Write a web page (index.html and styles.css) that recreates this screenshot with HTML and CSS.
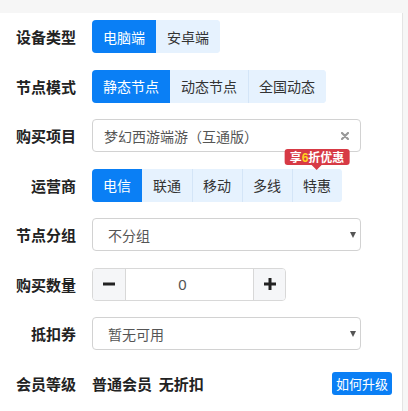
FILE: index.html
```html
<!DOCTYPE html>
<html lang="zh">
<head>
<meta charset="utf-8">
<link rel="stylesheet" href="styles.css">
</head>
<body>
<div class="panel">
  <div class="row">
    <div class="label">设备类型</div>
    <div class="btn-group">
      <span class="btn active">电脑端</span>
      <span class="btn">安卓端</span>
    </div>
  </div>
  <div class="row">
    <div class="label">节点模式</div>
    <div class="btn-group">
      <span class="btn active">静态节点</span>
      <span class="btn">动态节点</span>
      <span class="btn">全国动态</span>
    </div>
  </div>
  <div class="row">
    <div class="label">购买项目</div>
    <div class="field input">
      <span class="value">梦幻西游端游（互通版）</span>
      <svg class="clear" width="8" height="8" viewBox="0 0 8 8"><path d="M1 1L7 7M7 1L1 7" stroke="#999" stroke-width="2.2" stroke-linecap="round"/></svg>
    </div>
  </div>
  <div class="row">
    <div class="label">运营商</div>
    <div class="btn-group">
      <span class="btn active">电信</span>
      <span class="btn">联通</span>
      <span class="btn">移动</span>
      <span class="btn">多线</span>
      <span class="btn has-badge">特惠<span class="badge">享<b class="six">6</b>折优惠</span></span>
    </div>
  </div>
  <div class="row">
    <div class="label">节点分组</div>
    <div class="field select">
      <span class="value">不分组</span>
      <span class="caret"></span>
    </div>
  </div>
  <div class="row">
    <div class="label">购买数量</div>
    <div class="qty">
      <span class="qty-btn minus"><svg width="12" height="12" viewBox="0 0 12 12"><rect x="0" y="4.5" width="12" height="3" fill="#222"/></svg></span>
      <span class="qty-val">0</span>
      <span class="qty-btn plus"><svg width="12" height="12" viewBox="0 0 12 12"><rect x="0" y="4.5" width="12" height="3" fill="#222"/><rect x="4.5" y="0" width="3" height="12" fill="#222"/></svg></span>
    </div>
  </div>
  <div class="row">
    <div class="label">抵扣券</div>
    <div class="field select">
      <span class="value">暂无可用</span>
      <span class="caret"></span>
    </div>
  </div>
  <div class="row last">
    <div class="label">会员等级</div>
    <div class="member">普通会员&nbsp;&nbsp;无折扣</div>
    <span class="upgrade">如何升级</span>
  </div>
</div>
</body>
</html>
```
FILE: styles.css
```css
html, body {
  margin: 0;
  padding: 0;
}
body {
  background: #f6f6f6;
  font-family: "Noto Sans CJK SC", "Noto Sans", sans-serif;
  color: #333;
  height: 411px;
  overflow: hidden;
}
.panel {
  margin-top: 13px;
  width: 402px;
  border-right: 1px solid #e4e4e4;
  background: #fff;
  padding: 7px 0 11px;
  box-sizing: content-box;
}
.row {
  display: flex;
  align-items: center;
  height: 33px;
  margin-bottom: 16.5px;
  padding-right: 9px;
}
.row.last {
  margin-bottom: 0;
}
.label {
  width: 76px;
  margin-right: 16px;
  text-align: right;
  font-size: 15px;
  font-weight: bold;
  color: #222;
  flex-shrink: 0;
}
.btn-group {
  display: flex;
  height: 33px;
  border-radius: 4px;
  background: #e6f2fe;
}
.btn {
  position: relative;
  display: flex;
  align-items: center;
  padding: 0 11px;
  font-size: 14px;
  color: #333;
  background: #e6f2fe;
  box-shadow: inset 1px 0 0 #d4e5f7;
}
.btn:first-child {
  box-shadow: none;
  border-radius: 4px 0 0 4px;
}
.btn:last-child {
  border-radius: 0 4px 4px 0;
}
.btn.active {
  background: #0a7ff5;
  color: #fff;
  box-shadow: none;
}
.btn.active + .btn {
  box-shadow: none;
}
.badge {
  position: absolute;
  left: 50%;
  top: -20px;
  transform: translateX(-50%);
  height: 16px;
  padding: 0 5px;
  background: #d73a45;
  color: #fff;
  font-size: 12px;
  font-weight: bold;
  line-height: 16px;
  border-radius: 3px;
  white-space: nowrap;
}
.badge::after {
  content: "";
  position: absolute;
  left: 50%;
  bottom: -5px;
  margin-left: -5px;
  border-left: 5px solid transparent;
  border-right: 5px solid transparent;
  border-top: 5px solid #d73a45;
}
.six {
  color: #ffd21f;
  font-family: "Liberation Sans", sans-serif;
}
.field {
  width: 269px;
  height: 33px;
  box-sizing: border-box;
  border: 1px solid #d2d2d2;
  border-radius: 4px;
  display: flex;
  align-items: center;
  justify-content: space-between;
  font-size: 14px;
  color: #555;
}
.input {
  padding: 0 11px 0 11px;
}
.select {
  padding: 0 4px 0 15px;
}
.clear {
  display: block;
}
.caret {
  width: 0;
  height: 0;
  border-left: 3px solid transparent;
  border-right: 3px solid transparent;
  border-top: 6px solid #555;
}
.qty {
  display: flex;
  height: 33px;
  width: 194px;
  box-sizing: border-box;
  border: 1px solid #d8d8d8;
  border-radius: 4px;
}
.qty-btn {
  width: 32px;
  display: flex;
  align-items: center;
  justify-content: center;
  background: #f5f6f8;
}
.minus {
  border-right: 1px solid #d8d8d8;
  border-radius: 3px 0 0 3px;
}
.plus {
  border-left: 1px solid #d8d8d8;
  border-radius: 0 3px 3px 0;
  width: 31px;
}
.qty-val {
  flex: 1;
  display: flex;
  align-items: center;
  justify-content: center;
  padding-right: 14px;
  font-size: 15px;
  color: #555;
  font-family: "Liberation Sans", sans-serif;
}
.member {
  font-size: 15px;
  font-weight: bold;
  color: #222;
  flex: 1;
}
.upgrade {
  height: 23px;
  padding: 0 4px;
  display: flex;
  align-items: center;
  background: #0a7ff5;
  color: #fff;
  font-size: 13px;
  border-radius: 3px;
  margin-right: 1px;
}
```
